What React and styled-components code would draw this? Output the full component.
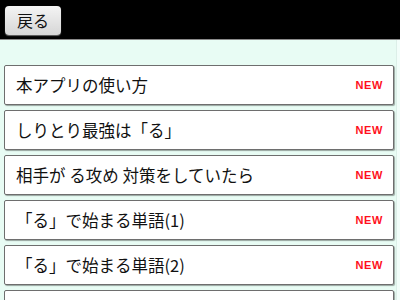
import styled, { createGlobalStyle } from 'styled-components'

const GlobalStyle = createGlobalStyle`
  html, body {
    margin: 0;
    padding: 0;
    background: #e8fcf4;
    font-family: "Noto Sans CJK JP", "Noto Sans", sans-serif;
  }
`

const Page = styled.div`
  width: 400px;
  height: 300px;
  overflow: hidden;
  display: flex;
  flex-direction: column;
  background: #e8fcf4;
`

const Header = styled.div`
  height: 40px;
  background: #000;
  border-bottom: 1px solid #8a8a8a;
  display: flex;
  align-items: flex-start;
  padding: 6px 0 0 5px;
  box-sizing: border-box;
  flex-shrink: 0;
`

const BackButton = styled.button`
  width: 56px;
  height: 29px;
  border: none;
  border-radius: 4px;
  background: linear-gradient(#f4f4f4, #d6d6d6);
  box-shadow: 0 1px 1px rgba(255, 255, 255, 0.4);
  font-family: "Noto Sans CJK JP", sans-serif;
  font-size: 16px;
  color: #111;
  padding: 0;
  line-height: 29px;
`

const Body = styled.div`
  flex: 1;
  display: flex;
`

const List = styled.div`
  flex: 1;
  display: flex;
  flex-direction: column;
  gap: 5px;
  padding: 25px 0 0 4px;
`

const ScrollTrack = styled.div`
  width: 4px;
  margin-left: 2px;
  background: #f2fefa;
  border-left: 1px solid #dcefe8;
`

const Item = styled.div`
  width: 390px;
  height: 40px;
  box-sizing: border-box;
  background: #fff;
  border: 1px solid #6e6e6e;
  border-radius: 2px;
  box-shadow: 1px 1px 1px rgba(0, 0, 0, 0.35);
  display: flex;
  align-items: center;
  justify-content: space-between;
  padding: 0 10px 0 11px;
  flex-shrink: 0;
`

const Title = styled.span`
  font-size: 16.5px;
  color: #111;
  white-space: nowrap;
`

const Badge = styled.span`
  font-family: "Liberation Sans", Arial, sans-serif;
  font-weight: bold;
  font-size: 11px;
  color: #ff1020;
  letter-spacing: 0.6px;
`

const items = [
  '本アプリの使い方',
  'しりとり最強は「る」',
  '相手が る攻め 対策をしていたら',
  '「る」で始まる単語(1)',
  '「る」で始まる単語(2)',
]

export default function App() {
  return (
    <Page>
      <GlobalStyle />
      <Header>
        <BackButton>戻る</BackButton>
      </Header>
      <Body>
        <List>
          {items.map((t) => (
            <Item key={t}>
              <Title>{t}</Title>
              <Badge>NEW</Badge>
            </Item>
          ))}
          {/* next row is only peeking in at the bottom edge */}
          <Item />
        </List>
        <ScrollTrack />
      </Body>
    </Page>
  )
}
